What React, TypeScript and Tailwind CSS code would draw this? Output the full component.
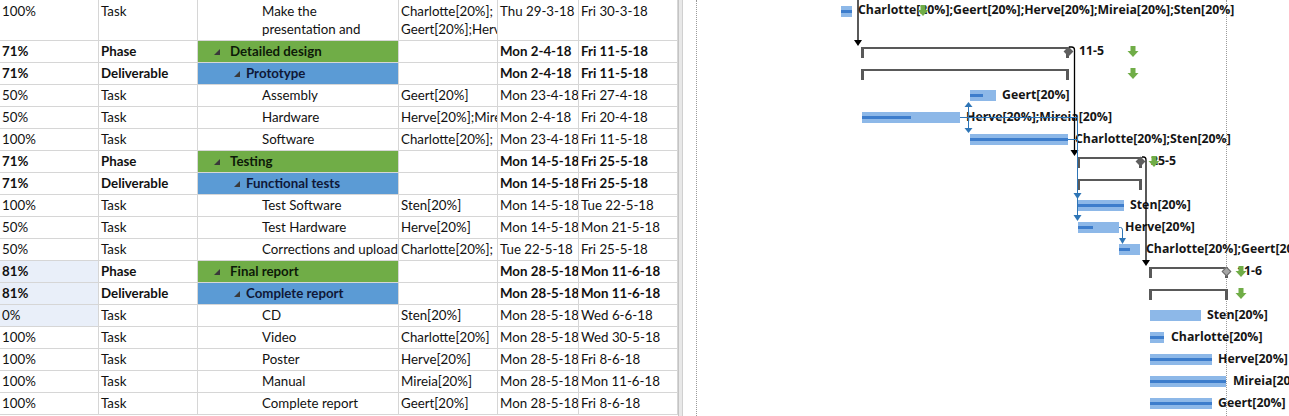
import React from "react";

type Kind = "task" | "phase" | "deliv";
type Row = {
  pct: string;
  type: string;
  name: string[];
  res: string[];
  wrapRes?: boolean;
  start: string;
  finish: string;
  kind: Kind;
  sel?: boolean;
};

const rows: Row[] = [
  { pct: "100%", type: "Task", name: ["Make the", "presentation and"], res: ["Charlotte[20%];", "Geert[20%];Herve[20%];Mireia[20%];Sten[20%]"], start: "Thu 29-3-18", finish: "Fri 30-3-18", kind: "task" },
  { pct: "71%", type: "Phase", name: ["Detailed design"], res: [""], start: "Mon 2-4-18", finish: "Fri 11-5-18", kind: "phase" },
  { pct: "71%", type: "Deliverable", name: ["Prototype"], res: [""], start: "Mon 2-4-18", finish: "Fri 11-5-18", kind: "deliv" },
  { pct: "50%", type: "Task", name: ["Assembly"], res: ["Geert[20%]"], start: "Mon 23-4-18", finish: "Fri 27-4-18", kind: "task" },
  { pct: "50%", type: "Task", name: ["Hardware"], res: ["Herve[20%];Mireia[20%]"], start: "Mon 2-4-18", finish: "Fri 20-4-18", kind: "task" },
  { pct: "100%", type: "Task", name: ["Software"], res: ["Charlotte[20%];", "Sten[20%]"], wrapRes: true, start: "Mon 23-4-18", finish: "Fri 11-5-18", kind: "task" },
  { pct: "71%", type: "Phase", name: ["Testing"], res: [""], start: "Mon 14-5-18", finish: "Fri 25-5-18", kind: "phase" },
  { pct: "71%", type: "Deliverable", name: ["Functional tests"], res: [""], start: "Mon 14-5-18", finish: "Fri 25-5-18", kind: "deliv" },
  { pct: "100%", type: "Task", name: ["Test Software"], res: ["Sten[20%]"], start: "Mon 14-5-18", finish: "Tue 22-5-18", kind: "task" },
  { pct: "50%", type: "Task", name: ["Test Hardware"], res: ["Herve[20%]"], start: "Mon 14-5-18", finish: "Mon 21-5-18", kind: "task" },
  { pct: "50%", type: "Task", name: ["Corrections and upload"], res: ["Charlotte[20%];", "Geert[20%]"], wrapRes: true, start: "Tue 22-5-18", finish: "Fri 25-5-18", kind: "task" },
  { pct: "81%", type: "Phase", name: ["Final report"], res: [""], start: "Mon 28-5-18", finish: "Mon 11-6-18", kind: "phase", sel: true },
  { pct: "81%", type: "Deliverable", name: ["Complete report"], res: [""], start: "Mon 28-5-18", finish: "Mon 11-6-18", kind: "deliv", sel: true },
  { pct: "0%", type: "Task", name: ["CD"], res: ["Sten[20%]"], start: "Mon 28-5-18", finish: "Wed 6-6-18", kind: "task", sel: true },
  { pct: "100%", type: "Task", name: ["Video"], res: ["Charlotte[20%]"], start: "Mon 28-5-18", finish: "Wed 30-5-18", kind: "task" },
  { pct: "100%", type: "Task", name: ["Poster"], res: ["Herve[20%]"], start: "Mon 28-5-18", finish: "Fri 8-6-18", kind: "task" },
  { pct: "100%", type: "Task", name: ["Manual"], res: ["Mireia[20%]"], start: "Mon 28-5-18", finish: "Mon 11-6-18", kind: "task" },
  { pct: "100%", type: "Task", name: ["Complete report"], res: ["Geert[20%]"], start: "Mon 28-5-18", finish: "Fri 8-6-18", kind: "task" },
];

type G = {
  bar?: [number, number, number | null];
  bracket?: [number, number];
  diamond?: { x: number; light?: boolean };
  green?: number;
  label?: { x: number; text: string };
};

const gantt: G[] = [
  { bar: [841, 852, 852], label: { x: 858, text: "Charlotte[20%];Geert[20%];Herve[20%];Mireia[20%];Sten[20%]" }, green: 923 },
  { bracket: [861, 1069], diamond: { x: 1068 }, label: { x: 1079, text: "11-5" }, green: 1133 },
  { bracket: [861, 1069], green: 1133 },
  { bar: [970, 996, 983], label: { x: 1002, text: "Geert[20%]" } },
  { bar: [862, 960, 911], label: { x: 966, text: "Herve[20%];Mireia[20%]" } },
  { bar: [970, 1068, 1068], label: { x: 1075, text: "Charlotte[20%];Sten[20%]" } },
  { bracket: [1077, 1142], diamond: { x: 1140 }, label: { x: 1151, text: "25-5" }, green: 1154 },
  { bracket: [1077, 1142] },
  { bar: [1078, 1124, 1124], label: { x: 1130, text: "Sten[20%]" } },
  { bar: [1078, 1119, 1093], label: { x: 1125, text: "Herve[20%]" } },
  { bar: [1119, 1140, 1130], label: { x: 1146, text: "Charlotte[20%];Geert[20%]" } },
  { bracket: [1149, 1228], diamond: { x: 1226, light: true }, label: { x: 1237, text: "11-6" }, green: 1241 },
  { bracket: [1149, 1228], green: 1241 },
  { bar: [1150, 1201, null], label: { x: 1207, text: "Sten[20%]" } },
  { bar: [1150, 1164, 1164], label: { x: 1171, text: "Charlotte[20%]" } },
  { bar: [1150, 1212, 1212], label: { x: 1218, text: "Herve[20%]" } },
  { bar: [1150, 1226, 1226], label: { x: 1233, text: "Mireia[20%]" } },
  { bar: [1150, 1212, 1212], label: { x: 1218, text: "Geert[20%]" } },
];

const GX = 683;
const tableFont = { fontFamily: "Lato, 'Open Sans', sans-serif" };
const ganttFont = { fontFamily: "'Open Sans', 'Noto Sans', sans-serif" };

function Tri() {
  return (
    <svg width="6" height="6" viewBox="0 0 6 6" className="shrink-0">
      <polygon points="0,6 6,6 6,0" fill="#3a3a3a" />
    </svg>
  );
}

function TableRow({ r, first }: { r: Row; first: boolean }) {
  const bold = r.kind !== "task" ? "font-bold" : "";
  const h = first ? "h-[41px]" : "h-[22px]";
  const cell = `border-r border-b border-[#d6d6d6] overflow-hidden ${h}`;
  const align = first ? "pt-[2px] leading-[18px] whitespace-nowrap" : "leading-[21px] whitespace-nowrap";
  let nameCls = "pl-[64px]";
  let nameBg = "";
  if (r.kind === "phase") {
    nameCls = "pl-[16px] gap-[10px] text-[#0d1a08]";
    nameBg = "bg-[#70ad47]";
  }
  if (r.kind === "deliv") {
    nameCls = "pl-[36px] gap-[6px] text-[#0f1838]";
    nameBg = "bg-[#5b9bd5]";
  }
  return (
    <div className="grid grid-cols-[99px_99px_201px_99px_81px_99px] text-[13.3px] text-[#111]">
      <div className={`${cell} ${align} ${bold} pl-[2px] ${r.sel ? "bg-[#e9eff9]" : ""}`}>{r.pct}</div>
      <div className={`${cell} ${align} ${bold} pl-[2px]`}>{r.type}</div>
      <div
        className={`${cell} ${bold} ${nameBg} ${
          r.kind === "task" ? align : "flex items-center whitespace-nowrap"
        } ${nameCls}`}
      >
        {r.kind !== "task" && <Tri />}
        {first ? (
          <div>
            {r.name.map((n, i) => (
              <div key={i}>{n}</div>
            ))}
          </div>
        ) : (
          <span>{r.name[0]}</span>
        )}
      </div>
      <div className={`${cell} pl-[2px] ${first ? "pt-[2px] leading-[18px]" : "leading-[21px]"}`}>
        {first || r.wrapRes ? (
          r.res.map((n, i) => (
            <div key={i} className="whitespace-nowrap">
              {n}
            </div>
          ))
        ) : (
          <div className="whitespace-nowrap">{r.res[0]}</div>
        )}
      </div>
      <div className={`${cell} ${align} ${bold} pl-[2px]`}>{r.start}</div>
      <div className={`${cell} ${align} ${bold} pl-[2px]`}>{r.finish}</div>
    </div>
  );
}

function GreenArrow({ x, top }: { x: number; top: number }) {
  return (
    <svg width="12" height="12" viewBox="0 0 12 12" className="absolute" style={{ left: x - GX - 6, top }}>
      <rect x="3.5" y="0" width="5" height="5" fill="#70ad47" />
      <polygon points="0.5,5 11.5,5 6,11" fill="#70ad47" />
    </svg>
  );
}

function GanttRow({ g, first }: { g: G; first: boolean }) {
  return (
    <div className={`relative shrink-0 ${first ? "h-[41px]" : "h-[22px]"}`}>
      {g.bar && (
        <div
          className="absolute h-[11px] bg-[#8db8e8]"
          style={{ left: g.bar[0] - GX, width: g.bar[1] - g.bar[0], top: first ? 6 : 5 }}
        >
          {g.bar[2] !== null && (
            <div className="absolute left-0 top-[4px] h-[3px] bg-[#3d7dcc]" style={{ width: (g.bar[2] as number) - g.bar[0] }} />
          )}
        </div>
      )}
      {g.bracket && (
        <div
          className="absolute h-[11px] border-t-2 border-l-[3px] border-r-[3px] border-[#595959]"
          style={{ left: g.bracket[0] - GX, width: g.bracket[1] - g.bracket[0], top: 6 }}
        />
      )}
      {g.diamond && (
        <div
          className={`absolute w-[7px] h-[7px] rotate-45 ${g.diamond.light ? "bg-[#a6a6a6] border border-[#6b6b6b]" : "bg-[#5f5f5f]"}`}
          style={{ left: g.diamond.x - GX - 3.5, top: 7 }}
        />
      )}
      {g.label && (
        <div
          className="absolute top-[1px] h-[18px] leading-[18px] whitespace-nowrap text-[12.3px] font-bold text-[#151515]"
          style={{ ...ganttFont, left: g.label.x - GX }}
        >
          {g.label.text}
        </div>
      )}
      {g.green !== undefined && <GreenArrow x={g.green} top={5} />}
    </div>
  );
}

function Connectors() {
  const L = (x: number) => x - GX;
  const blue = "#2e75b6";
  return (
    <svg className="absolute inset-0 pointer-events-none" width="606" height="416" viewBox="0 0 606 416">
      <g stroke="#000" strokeWidth="1.3" fill="none">
        <path d={`M${L(858)} 0 V41`} />
        <path d={`M${L(1069)} 47 H${L(1071.5)} Q${L(1074.5)} 47 ${L(1074.5)} 50 V151`} />
        <path d={`M${L(1142)} 157 H${L(1143.5)} Q${L(1146)} 157 ${L(1146)} 160 V261`} />
      </g>
      <g fill="#000">
        <polygon points={`${L(854)},40 ${L(862)},40 ${L(858)},46`} />
        <polygon points={`${L(1070.5)},150 ${L(1078.5)},150 ${L(1074.5)},156`} />
        <polygon points={`${L(1142)},260 ${L(1150)},260 ${L(1146)},266`} />
      </g>
      <g stroke={blue} strokeWidth="1" fill="none">
        <path d={`M${L(960)} 117.5 H${L(1077.5)}`} />
        <path d={`M${L(968.5)} 106 V130`} />
        <path d={`M${L(1068)} 139.5 H${L(1077.5)}`} />
        <path d={`M${L(1077.5)} 117 V216`} />
        <path d={`M${L(1119)} 227.5 H${L(1120.5)} Q${L(1122.5)} 227.5 ${L(1122.5)} 230 V239`} />
      </g>
      <g fill={blue}>
        <polygon points={`${L(964.5)},107 ${L(972.5)},107 ${L(968.5)},102`} />
        <polygon points={`${L(964.5)},128 ${L(972.5)},128 ${L(968.5)},133`} />
        <polygon points={`${L(1073.5)},193 ${L(1081.5)},193 ${L(1077.5)},199`} />
        <polygon points={`${L(1073.5)},215 ${L(1081.5)},215 ${L(1077.5)},221`} />
        <polygon points={`${L(1119)},238 ${L(1126)},238 ${L(1122.5)},244`} />
      </g>
    </svg>
  );
}

export default function App() {
  return (
    <div className="flex w-[1289px] h-[416px] overflow-hidden bg-white" style={tableFont}>
      <div className="w-[678px] shrink-0 flex flex-col">
        {rows.map((r, i) => (
          <TableRow key={i} r={r} first={i === 0} />
        ))}
      </div>
      <div className="w-[5px] shrink-0 h-full bg-[#e8e8e8] border-l border-[#c4c4c4] border-r border-r-[#d0d0d0]" />
      <div className="relative flex-1 h-full overflow-hidden">
        <div className="absolute top-0 bottom-0 left-[13px] border-l border-dotted border-[#9a9a9a]" />
        <div className="absolute top-0 bottom-0 left-[543px] border-l border-dotted border-[#9a9a9a]" />
        <div className="flex flex-col">
          {gantt.map((g, i) => (
            <GanttRow key={i} g={g} first={i === 0} />
          ))}
        </div>
        <Connectors />
      </div>
    </div>
  );
}
